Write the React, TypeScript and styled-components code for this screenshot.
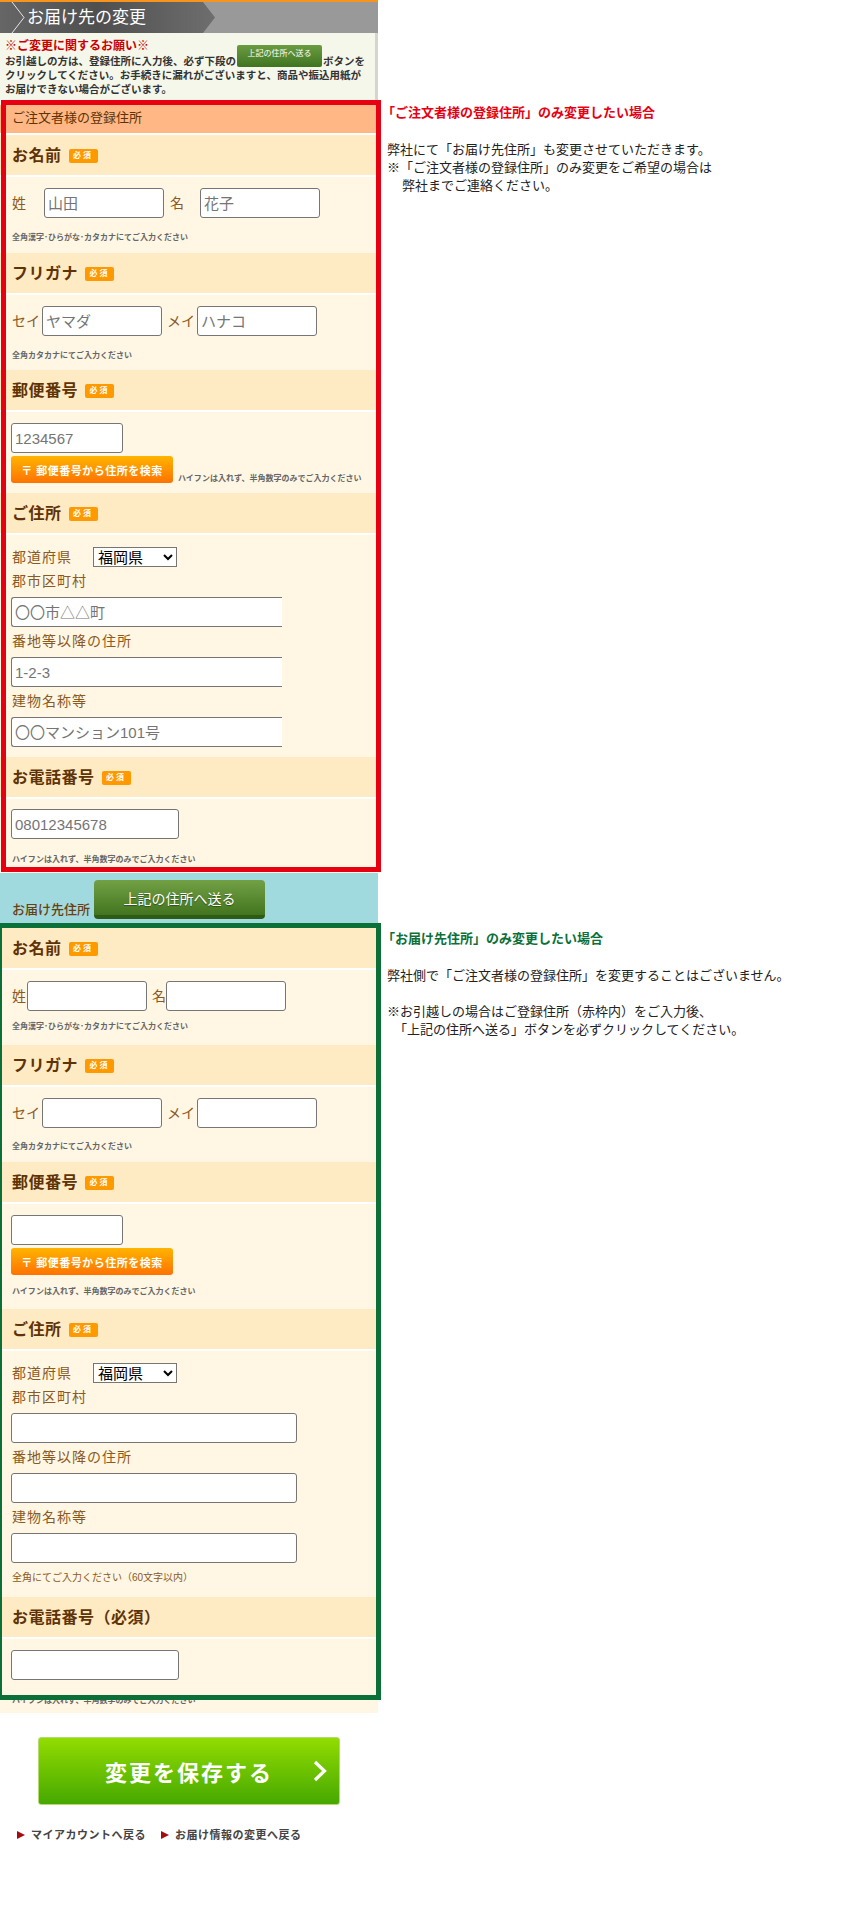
import React from "react";
import styled, { createGlobalStyle } from "styled-components";

const FONT = `"Liberation Sans", "Noto Sans CJK JP", sans-serif`;

const GlobalStyle = createGlobalStyle`
  html, body {
    margin: 0;
    padding: 0;
    background: #fff;
  }
  body {
    font-family: ${FONT};
  }
`;

const Page = styled.div`
  width: 842px;
  height: 1905px;
  overflow: hidden;
`;

const Column = styled.div`
  width: 378px;
`;

const TitleBar = styled.header`
  position: relative;
  height: 33px;
  box-sizing: border-box;
  border-top: 2px solid #f7941d;
  background: #999;
`;

const TitleShape = styled.h1`
  width: 215px;
  height: 31px;
  margin: 0;
  box-sizing: border-box;
  padding-left: 27px;
  background: linear-gradient(90deg, #666 0%, #4f4f4f 45%, #6e6e6e 100%);
  clip-path: polygon(0 0, 203px 0, 215px 50%, 203px 100%, 0 100%);
  color: #fff;
  font-size: 17px;
  font-weight: 400;
  line-height: 31px;
`;

const TitleNotch = styled.svg`
  position: absolute;
  left: 0;
  top: 0;
`;

const Notice = styled.section`
  height: 72px;
  box-sizing: border-box;
  padding: 5px 0 0 5px;
  background: #f5f7ea;
  border-right: 3px solid #d6d6c8;
  color: #333;
  font-size: 10.5px;
  font-weight: 700;
  line-height: 14px;
  white-space: nowrap;
`;

const NoticeHead = styled.div`
  color: #cc0000;
  font-size: 12px;
  line-height: 16px;
`;

const MiniButton = styled.span`
  display: inline-block;
  width: 85px;
  height: 22px;
  margin: -9px 1px -1px;
  border-radius: 2px;
  background: linear-gradient(#6b9c42, #3f7420);
  color: #fff;
  font-size: 8px;
  font-weight: 400;
  line-height: 18px;
  text-align: center;
  vertical-align: top;
`;

const Block = styled.div`
  position: relative;
`;

const Frame = styled.div<{ $color: string; $left: number; $bottom: number }>`
  position: absolute;
  top: -5px;
  left: ${(p) => p.$left}px;
  right: -3px;
  bottom: ${(p) => p.$bottom}px;
  border: 5px solid ${(p) => p.$color};
  pointer-events: none;
`;

const Annotation = styled.aside<{ $top: number; $color: string }>`
  position: absolute;
  top: ${(p) => p.$top}px;
  left: 387px;
  width: 440px;
  color: #222;
  font-size: 13px;
  line-height: 18.3px;
  white-space: nowrap;

  strong {
    display: inline-block;
    margin-left: -5px;
    color: ${(p) => p.$color};
    font-weight: 700;
  }
`;

const Indent = styled.span<{ $width: number }>`
  display: inline-block;
  width: ${(p) => p.$width}px;
`;

const SectionHead = styled.div`
  height: 28px;
  box-sizing: border-box;
  margin-bottom: 2px;
  padding-left: 12px;
  background: #ffb885;
  color: #5e3306;
  font-size: 13px;
  line-height: 26px;
`;

const Heading = styled.h2`
  display: flex;
  align-items: center;
  height: 40px;
  box-sizing: border-box;
  margin: 0 0 2px;
  padding: 0 0 2px 12px;
  background: #feeac3;
  color: #5e3306;
  font-size: 16px;
  font-weight: 700;
  letter-spacing: 0.5px;
`;

const Badge = styled.span`
  width: 29px;
  height: 14px;
  margin: 3px 0 0 7px;
  border-radius: 2px;
  background: #ff9900;
  color: #fff;
  font-size: 8px;
  font-weight: 700;
  letter-spacing: 2px;
  line-height: 14px;
  text-align: center;
`;

const Body = styled.div<{ $height: number; $top?: number }>`
  height: ${(p) => p.$height}px;
  box-sizing: border-box;
  padding: ${(p) => p.$top ?? 11}px 0 0 11px;
  background: #fff6e4;
  overflow: hidden;
`;

const Row = styled.div`
  display: flex;
  align-items: center;
`;

const RowLabel = styled.label<{ $width: number; $inset?: number }>`
  flex: none;
  width: ${(p) => p.$width}px;
  box-sizing: border-box;
  padding-left: ${(p) => p.$inset ?? 1}px;
  color: #8a5a22;
  font-size: 14px;
  line-height: 20px;
`;

const TextInput = styled.input<{ $width: number; $clipped?: boolean }>`
  flex: none;
  display: block;
  width: ${(p) => p.$width}px;
  height: 30px;
  box-sizing: border-box;
  margin: 0;
  padding: 0 3px;
  background: #fff;
  border: 1px solid #767676;
  border-right: ${(p) => (p.$clipped ? "none" : "1px solid #767676")};
  border-radius: ${(p) => (p.$clipped ? "3px 0 0 3px" : "3px")};
  font-family: ${FONT};
  font-size: 15px;
  color: #333;

  &::placeholder {
    color: #757575;
    opacity: 1;
  }
`;

const SmallNote = styled.p<{ $top: number }>`
  margin: ${(p) => p.$top}px 0 0 1px;
  color: #666;
  font-size: 8px;
  font-weight: 700;
  line-height: 12px;
  white-space: nowrap;
`;

const BrownNote = styled.p`
  margin: 8px 0 0 1px;
  color: #8a5a22;
  font-size: 10px;
  line-height: 14px;
`;

const ZipButton = styled.button`
  display: block;
  flex: none;
  width: 162px;
  height: 27px;
  margin: 3px 0 0;
  padding: 0;
  border: none;
  border-radius: 3px;
  background: linear-gradient(#ffb400, #ff7200);
  color: #fff;
  font-family: ${FONT};
  font-size: 11px;
  font-weight: 700;
  letter-spacing: 0.5px;
  white-space: nowrap;
`;

const ZipRow = styled.div`
  display: flex;
  align-items: flex-end;
`;

const InlineNote = styled.span`
  margin: 0 0 -2px 5px;
  color: #666;
  font-size: 8px;
  font-weight: 700;
  line-height: 12px;
  white-space: nowrap;
`;

const PrefSelect = styled.select`
  width: 84px;
  height: 20px;
  box-sizing: border-box;
  padding: 0;
  background: #fff;
  font-family: ${FONT};
  font-size: 15px;
  color: #000;
`;

const AddressLabel = styled.label`
  display: block;
  margin: 4px 0 6px 1px;
  color: #8a5a22;
  font-size: 14px;
  letter-spacing: 1px;
  line-height: 20px;
`;

const PrefLabel = styled(AddressLabel)`
  flex: none;
  width: 81px;
  margin: 0 0 0 1px;
  box-sizing: border-box;
`;

const Band = styled.div`
  display: flex;
  align-items: flex-start;
  height: 55px;
  box-sizing: border-box;
  padding: 7px 0 0 12px;
  background: #a0dadf;
`;

const BandLabel = styled.span`
  width: 82px;
  margin-top: 20px;
  color: #6b3e10;
  font-size: 13px;
  font-weight: 500;
  line-height: 20px;
`;

const SendButton = styled.button`
  width: 171px;
  height: 39px;
  padding: 0 0 3px;
  border: none;
  border-radius: 4px;
  background: linear-gradient(#72a045, #42751f 90%, #2f5c15 90%);
  color: #fff;
  font-family: ${FONT};
  font-size: 14px;
  text-shadow: 0 1px 1px rgba(0, 0, 0, 0.4);
`;

const Footer = styled.footer`
  padding: 24px 0 0 38px;
`;

const SaveButton = styled.button`
  display: grid;
  grid-template-columns: 1fr auto 1fr;
  align-items: center;
  width: 302px;
  height: 68px;
  padding: 0 12px;
  border: 1px solid #b5d96e;
  border-radius: 3px;
  background: linear-gradient(#92dc00, #46a800);
  color: #fff;
  font-family: ${FONT};
  font-size: 22px;
  font-weight: 700;
  letter-spacing: 2px;

  svg {
    grid-column: 3;
    justify-self: end;
  }
`;

const SaveLabel = styled.span`
  grid-column: 2;
`;

const BackLinks = styled.nav`
  display: flex;
  gap: 15px;
  margin: 23px 0 0 -21px;
`;

const BackLink = styled.a`
  display: flex;
  align-items: center;
  gap: 6px;
  color: #444;
  font-size: 11px;
  font-weight: 700;
  letter-spacing: 0.5px;
  line-height: 14px;
`;

const Triangle = styled.span`
  width: 0;
  height: 0;
  border-style: solid;
  border-width: 4px 0 4px 8px;
  border-color: transparent transparent transparent #a30d0d;
`;

const Required = () => <Badge>必須</Badge>;

function App() {
  return (
    <Page>
      <GlobalStyle />
      <Column>
        <TitleBar>
          <TitleShape>お届け先の変更</TitleShape>
          <TitleNotch width="26" height="31" viewBox="0 0 26 31">
            <path d="M12 0 L24 15.5 L12 31" fill="none" stroke="#e6e6e6" strokeWidth="1" />
          </TitleNotch>
        </TitleBar>
        <Notice>
          <NoticeHead>※ご変更に関するお願い※</NoticeHead>
          お引越しの方は、登録住所に入力後、必ず下段の<MiniButton>上記の住所へ送る</MiniButton>ボタンを
          <br />
          クリックしてください。お手続きに漏れがございますと、商品や振込用紙が
          <br />
          お届けできない場合がございます。
        </Notice>

        <Block>
          <Frame $color="#e60012" $left={1} $bottom={1} />
          <Annotation $top={-1} $color="#e60012">
            <strong>「ご注文者様の登録住所」のみ変更したい場合</strong>
            <br />
            <br />
            弊社にて「お届け先住所」も変更させていただきます。
            <br />
            ※「ご注文者様の登録住所」のみ変更をご希望の場合は
            <br />
            <Indent $width={15} />
            弊社までご連絡ください。
          </Annotation>
          <SectionHead>ご注文者様の登録住所</SectionHead>

          <Heading>
            お名前
            <Required />
          </Heading>
          <Body $height={76}>
            <Row>
              <RowLabel $width={33}>姓</RowLabel>
              <TextInput $width={120} placeholder="山田" />
              <RowLabel $width={36} $inset={6}>
                名
              </RowLabel>
              <TextInput $width={120} placeholder="花子" />
            </Row>
            <SmallNote $top={14}>全角漢字･ひらがな･カタカナにてご入力ください</SmallNote>
          </Body>

          <Heading>
            フリガナ
            <Required />
          </Heading>
          <Body $height={75}>
            <Row>
              <RowLabel $width={31}>セイ</RowLabel>
              <TextInput $width={120} placeholder="ヤマダ" />
              <RowLabel $width={35} $inset={5}>
                メイ
              </RowLabel>
              <TextInput $width={120} placeholder="ハナコ" />
            </Row>
            <SmallNote $top={14}>全角カタカナにてご入力ください</SmallNote>
          </Body>

          <Heading>
            郵便番号
            <Required />
          </Heading>
          <Body $height={81}>
            <TextInput $width={112} placeholder="1234567" />
            <ZipRow>
              <ZipButton>〒 郵便番号から住所を検索</ZipButton>
              <InlineNote>ハイフンは入れず、半角数字のみでご入力ください</InlineNote>
            </ZipRow>
          </Body>

          <Heading>
            ご住所
            <Required />
          </Heading>
          <Body $height={222} $top={12}>
            <Row>
              <PrefLabel>都道府県</PrefLabel>
              <PrefSelect defaultValue="福岡県">
                <option>福岡県</option>
              </PrefSelect>
            </Row>
            <AddressLabel>郡市区町村</AddressLabel>
            <TextInput $width={271} $clipped placeholder="〇〇市△△町" />
            <AddressLabel>番地等以降の住所</AddressLabel>
            <TextInput $width={271} $clipped placeholder="1-2-3" />
            <AddressLabel>建物名称等</AddressLabel>
            <TextInput $width={271} $clipped placeholder="〇〇マンション101号" />
          </Body>

          <Heading>
            お電話番号
            <Required />
          </Heading>
          <Body $height={74} $top={10}>
            <TextInput $width={168} placeholder="08012345678" />
            <SmallNote $top={15}>ハイフンは入れず、半角数字のみでご入力ください</SmallNote>
          </Body>
        </Block>

        <Band>
          <BandLabel>お届け先住所</BandLabel>
          <SendButton>上記の住所へ送る</SendButton>
        </Band>

        <Block>
          <Frame $color="#0b7038" $left={-3} $bottom={13} />
          <Annotation $top={2} $color="#0b7038">
            <strong>「お届け先住所」のみ変更したい場合</strong>
            <br />
            <br />
            弊社側で「ご注文者様の登録住所」を変更することはございません。
            <br />
            <br />
            ※お引越しの場合はご登録住所（赤枠内）をご入力後、
            <br />
            <Indent $width={7} />
            「上記の住所へ送る」ボタンを必ずクリックしてください。
          </Annotation>

          <Heading>
            お名前
            <Required />
          </Heading>
          <Body $height={75}>
            <Row>
              <RowLabel $width={16}>姓</RowLabel>
              <TextInput $width={120} />
              <RowLabel $width={19} $inset={5}>
                名
              </RowLabel>
              <TextInput $width={120} />
            </Row>
            <SmallNote $top={10}>全角漢字･ひらがな･カタカナにてご入力ください</SmallNote>
          </Body>

          <Heading>
            フリガナ
            <Required />
          </Heading>
          <Body $height={75}>
            <Row>
              <RowLabel $width={31}>セイ</RowLabel>
              <TextInput $width={120} />
              <RowLabel $width={35} $inset={5}>
                メイ
              </RowLabel>
              <TextInput $width={120} />
            </Row>
            <SmallNote $top={13}>全角カタカナにてご入力ください</SmallNote>
          </Body>

          <Heading>
            郵便番号
            <Required />
          </Heading>
          <Body $height={105}>
            <TextInput $width={112} />
            <ZipButton>〒 郵便番号から住所を検索</ZipButton>
            <SmallNote $top={11}>ハイフンは入れず、半角数字のみでご入力ください</SmallNote>
          </Body>

          <Heading>
            ご住所
            <Required />
          </Heading>
          <Body $height={246} $top={12}>
            <Row>
              <PrefLabel>都道府県</PrefLabel>
              <PrefSelect defaultValue="福岡県">
                <option>福岡県</option>
              </PrefSelect>
            </Row>
            <AddressLabel>郡市区町村</AddressLabel>
            <TextInput $width={286} />
            <AddressLabel>番地等以降の住所</AddressLabel>
            <TextInput $width={286} />
            <AddressLabel>建物名称等</AddressLabel>
            <TextInput $width={286} />
            <BrownNote>全角にてご入力ください（60文字以内）</BrownNote>
          </Body>

          <Heading>お電話番号（必須）</Heading>
          <Body $height={74}>
            <TextInput $width={168} />
            <SmallNote $top={15}>ハイフンは入れず、半角数字のみでご入力ください</SmallNote>
          </Body>
        </Block>

        <Footer>
          <SaveButton>
            <SaveLabel>変更を保存する</SaveLabel>
            <svg width="14" height="22" viewBox="0 0 14 22">
              <path d="M2 2 L11.5 11 L2 20" fill="none" stroke="#fff" strokeWidth="3.2" />
            </svg>
          </SaveButton>
          <BackLinks>
            <BackLink>
              <Triangle />
              マイアカウントへ戻る
            </BackLink>
            <BackLink>
              <Triangle />
              お届け情報の変更へ戻る
            </BackLink>
          </BackLinks>
        </Footer>
      </Column>
    </Page>
  );
}

export default App;
